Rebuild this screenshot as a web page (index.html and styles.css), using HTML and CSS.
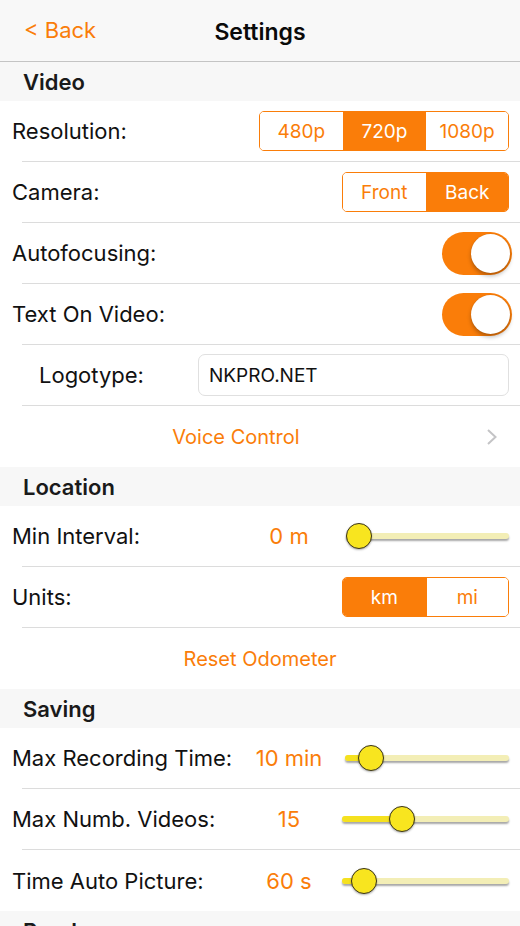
FILE: index.html
```html
<!DOCTYPE html>
<html>
<head>
<meta charset="utf-8">
<link rel="stylesheet" href="styles.css">
</head>
<body>
<header class="nav">
  <span class="back">&lt; Back</span>
  <span class="title">Settings</span>
</header>

<div class="section">Video</div>
<div class="row">
  <span class="label">Resolution:</span>
  <div class="seg seg3">
    <span class="s">480p</span><span class="s on">720p</span><span class="s">1080p</span>
  </div>
</div>
<div class="row">
  <span class="label">Camera:</span>
  <div class="seg seg2">
    <span class="s">Front</span><span class="s on">Back</span>
  </div>
</div>
<div class="row">
  <span class="label">Autofocusing:</span>
  <div class="toggle"><div class="knob"></div></div>
</div>
<div class="row">
  <span class="label">Text On Video:</span>
  <div class="toggle"><div class="knob"></div></div>
</div>
<div class="row">
  <span class="label indent">Logotype:</span>
  <div class="field">NKPRO.NET</div>
</div>
<div class="row link last">
  <span class="linktext withchev">Voice Control</span>
  <svg class="chev" width="12" height="18" viewBox="0 0 12 18"><path d="M2 2 L9.5 9 L2 16" fill="none" stroke="#c4c4c6" stroke-width="2"/></svg>
</div>

<div class="section">Location</div>
<div class="row slrow">
  <span class="label">Min Interval:</span>
  <span class="value">0 m</span>
  <div class="slider s-min"><div class="track"></div><div class="fill" style="width:0%"></div><div class="thumb" style="left:13px"></div></div>
</div>
<div class="row">
  <span class="label">Units:</span>
  <div class="seg seg2">
    <span class="s on">km</span><span class="s">mi</span>
  </div>
</div>
<div class="row link last">
  <span class="linktext">Reset Odometer</span>
</div>

<div class="section">Saving</div>
<div class="row slrow">
  <span class="label">Max Recording Time:</span>
  <span class="value">10 min</span>
  <div class="slider s-rec"><div class="track"></div><div class="fill" style="width:26px"></div><div class="thumb" style="left:26px"></div></div>
</div>
<div class="row slrow">
  <span class="label">Max Numb. Videos:</span>
  <span class="value">15</span>
  <div class="slider"><div class="track"></div><div class="fill" style="width:60px"></div><div class="thumb" style="left:60px"></div></div>
</div>
<div class="row slrow last">
  <span class="label">Time Auto Picture:</span>
  <span class="value">60 s</span>
  <div class="slider"><div class="track"></div><div class="fill" style="width:22px"></div><div class="thumb" style="left:22px"></div></div>
</div>

<div class="section">Roadar</div>
</body>
</html>
```

FILE: styles.css
```css
* { box-sizing: border-box; }
html, body { margin: 0; padding: 0; }
body {
  width: 520px;
  height: 926px;
  overflow: hidden;
  background: #ffffff;
  font-family: Inter, "Open Sans", "Liberation Sans", sans-serif;
  color: #111111;
}
.nav {
  height: 62px;
  background: #f8f8f8;
  border-bottom: 1px solid #c4c4c4;
  position: relative;
  display: flex;
  align-items: center;
  justify-content: center;
  padding-top: 2px;
}
.back {
  position: absolute;
  left: 24px;
  top: 17px;
  font-size: 22px;
  color: #fa7d09;
}
.title {
  font-size: 23px;
  font-weight: 600;
  color: #0a0a0a;
}
.section {
  height: 39px;
  background: #f7f7f7;
  padding-left: 23px;
  padding-top: 1px;
  font-size: 22px;
  font-weight: 600;
  line-height: 38px;
  color: #1a1a1a;
}
.row {
  height: 61px;
  margin-left: 22px;
  padding-left: 0;
  padding-right: 11px;
  border-bottom: 1px solid #dcdcdc;
  display: flex;
  align-items: center;
  justify-content: space-between;
}
.row.last { border-bottom: none; }
.row > .label { margin-left: -10px; }
.label {
  font-size: 22px;
  color: #111111;
}
.label.indent { margin-left: 17px; }
.seg {
  display: flex;
  height: 40px;
  border: 1px solid #fa7d09;
  border-radius: 5px;
  overflow: hidden;
}
.seg .s {
  display: flex;
  align-items: center;
  justify-content: center;
  font-size: 19px;
  color: #fa7d09;
  background: #ffffff;
  border-left: 1px solid #fa7d09;
}
.seg .s:first-child { border-left: none; }
.seg .s.on { background: #fa7d09; color: #ffffff; }
.seg3 .s { width: 82.7px; }
.seg2 .s { width: 82.5px; }
.toggle {
  width: 70px;
  height: 43px;
  border-radius: 22px;
  background: #fa7d09;
  position: relative;
  margin-right: -3px;
}
.knob {
  position: absolute;
  right: 2px;
  top: 2px;
  width: 39px;
  height: 39px;
  border-radius: 50%;
  background: #ffffff;
  box-shadow: 0 3px 4px rgba(0,0,0,0.28), 0 0 1px rgba(0,0,0,0.2);
}
.field {
  width: 311px;
  height: 42px;
  border: 1px solid #e0e0e0;
  border-radius: 7px;
  padding-left: 10px;
  display: flex;
  align-items: center;
  font-size: 19px;
  color: #111111;
}
.link {
  justify-content: center;
  position: relative;
  margin-left: 0;
  padding-right: 0;
}
.linktext {
  font-size: 20px;
  color: #fa7d09;
}
.linktext.withchev { margin-left: -48px; }
.chev {
  position: absolute;
  right: 22px;
  top: 22px;
}
.slrow {
  justify-content: flex-start;
}
.value {
  width: 86px;
  margin-left: auto;
  text-align: center;
  font-size: 22px;
  color: #fa7d09;
}
.slider {
  position: relative;
  width: 167px;
  height: 30px;
  margin-left: 10px;
}
.slider.s-min { width: 163px; margin-left: 14px; }
.slider.s-rec { width: 164px; margin-left: 13px; }
.track {
  position: absolute;
  left: 0;
  right: 0;
  top: 12px;
  height: 6px;
  border-radius: 3px;
  background: #f3eeb6;
  box-shadow: 0 2px 2px rgba(0,0,0,0.35);
}
.fill {
  position: absolute;
  left: 0;
  top: 12px;
  height: 6px;
  border-radius: 3px;
  background: #f5e11f;
}
.thumb {
  position: absolute;
  top: 2px;
  width: 26px;
  height: 26px;
  margin-left: -13px;
  border-radius: 50%;
  background: #f8e51f;
  border: 1px solid #3a3418;
  box-shadow: 0 1px 2px rgba(0,0,0,0.3);
}
```
